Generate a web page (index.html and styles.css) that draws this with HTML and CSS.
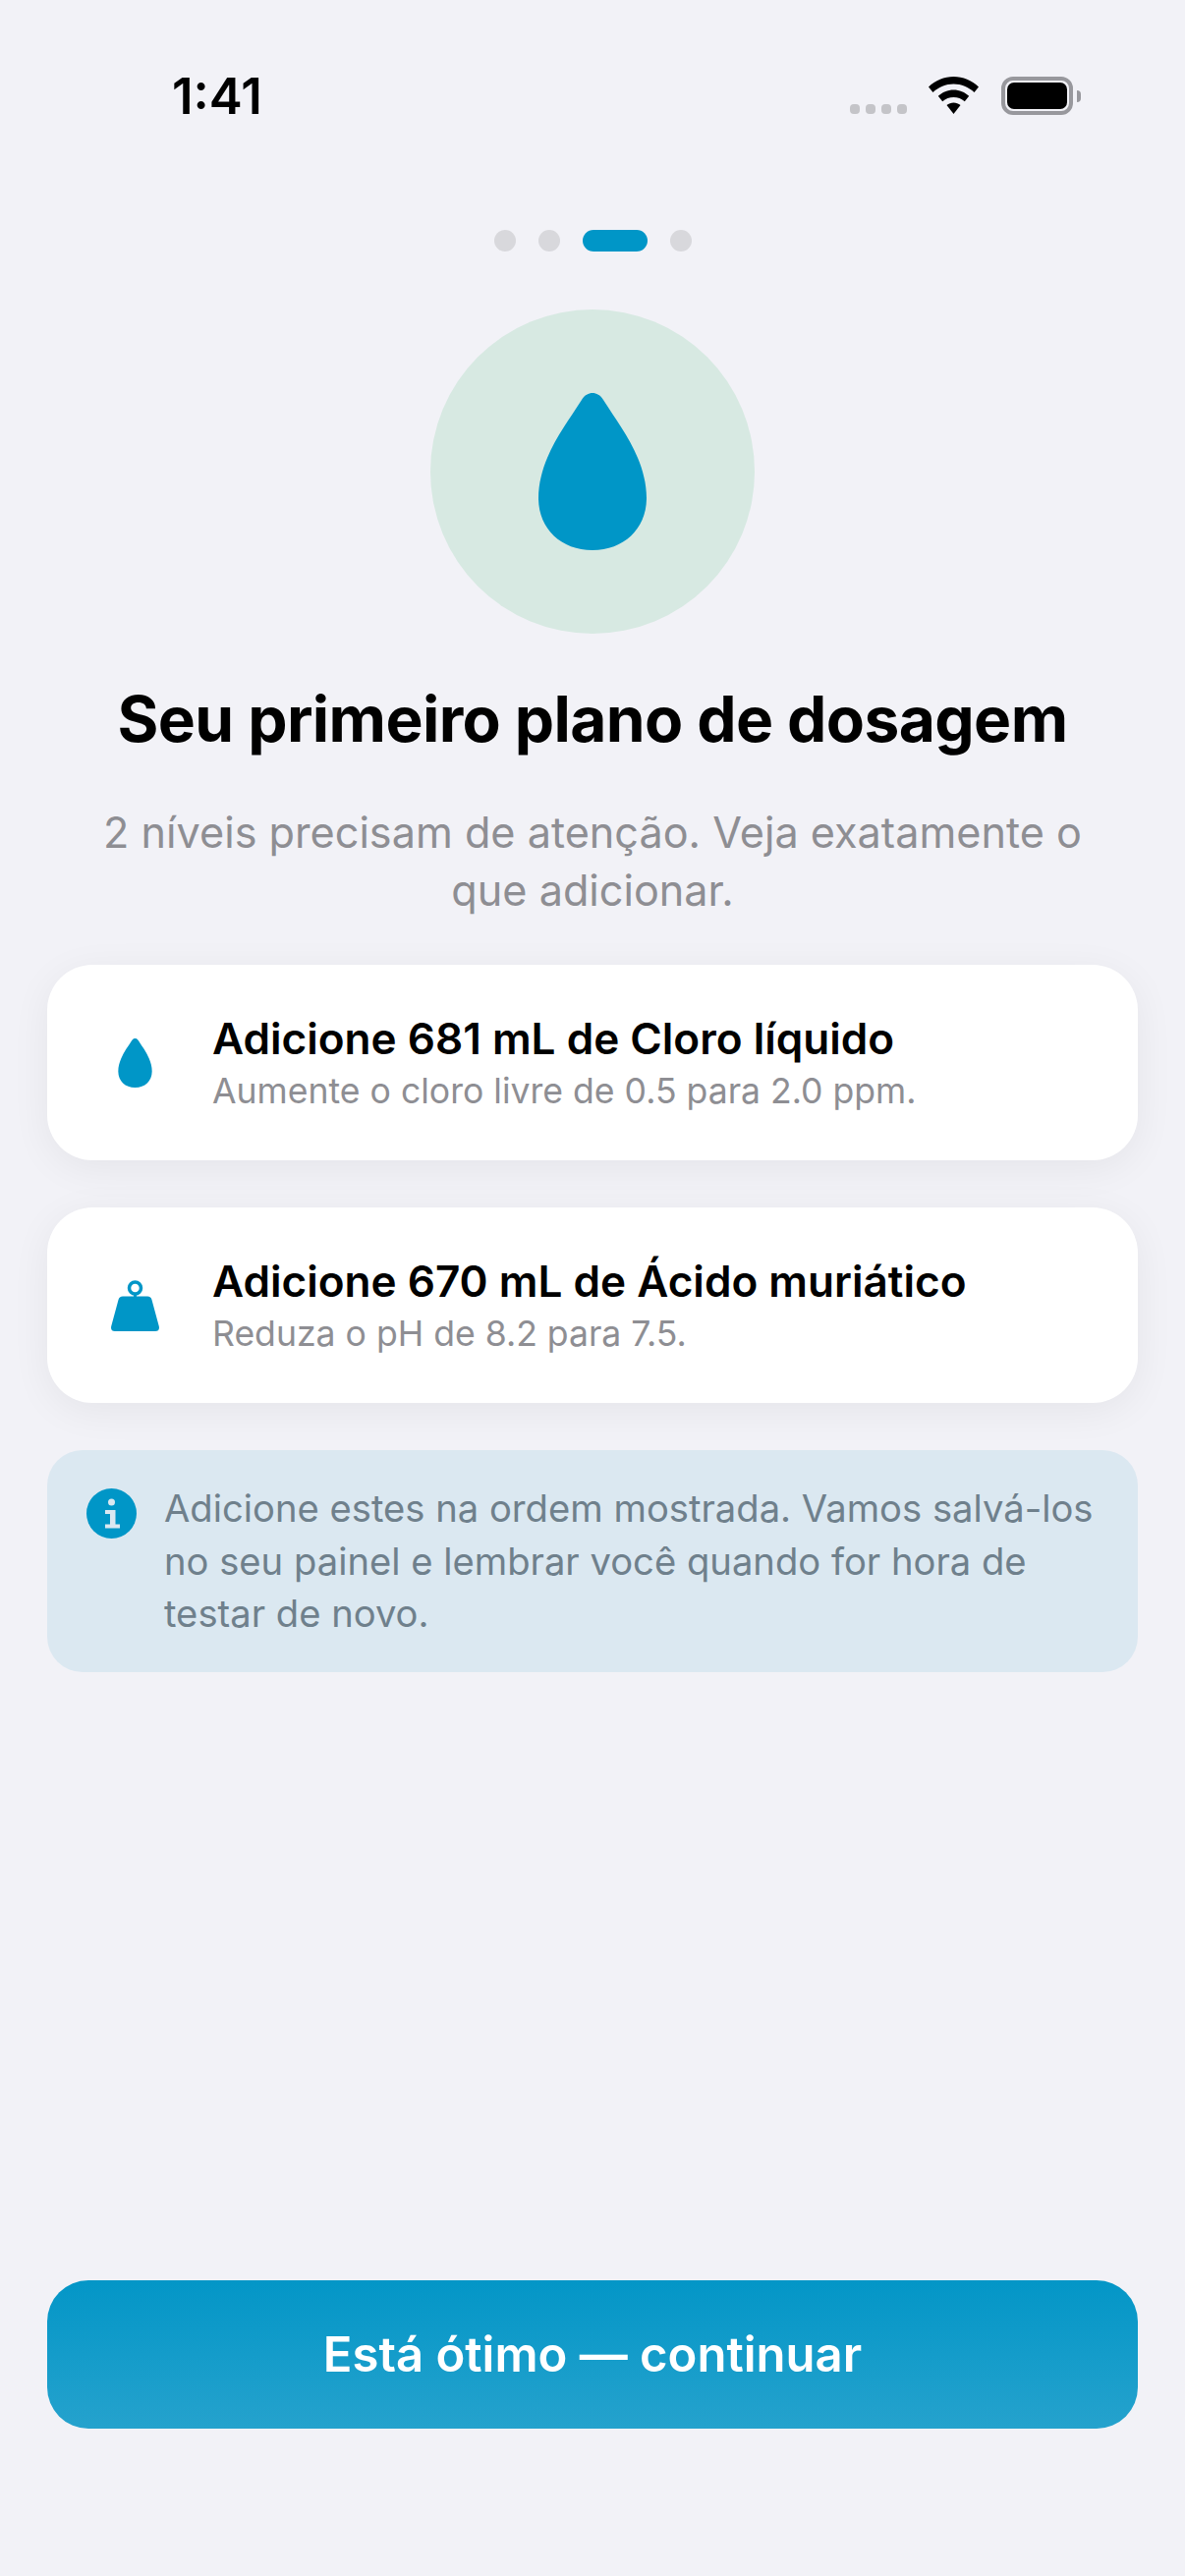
FILE: index.html
```html
<!DOCTYPE html>
<html lang="pt-BR">
<head>
<meta charset="utf-8">
<title>Seu primeiro plano de dosagem</title>
<link rel="stylesheet" href="styles.css">
</head>
<body>
<svg class="defs" width="0" height="0" aria-hidden="true">
  <symbol id="drop" viewBox="0 0 110 160">
    <path d="M55 0C59 0 63 2 66 7C78 26 92 44 101 66C106 78 110 92 110 107C110 138 87 160 55 160C23 160 0 138 0 107C0 92 4 78 9 66C18 44 32 26 44 7C47 2 51 0 55 0Z"/>
  </symbol>
</svg>
<main class="screen">
  <header class="status">
    <span class="time">1:41</span>
    <div class="status-icons">
      <div class="cells"><i></i><i></i><i></i><i></i></div>
      <svg class="wifi" viewBox="0 0 51 38"><path d="M25.500 0C35 0 44 3.800 51 10.500L46.500 16C40.800 10.700 33.400 7.500 25.500 7.500C17.600 7.500 10.200 10.700 4.500 16L0 10.500C7 3.800 16 0 25.500 0Z"/><path d="M25.500 13.500C31.400 13.500 37 15.800 41.200 19.800L36.800 25.200C33.700 22.500 29.700 21 25.500 21C21.300 21 17.300 22.500 14.200 25.200L9.800 19.800C14 15.800 19.600 13.500 25.500 13.500Z"/><path d="M25.500 26.500C28 26.500 30.500 27.400 32.500 29L25.500 38L18.500 29C20.500 27.400 23 26.500 25.500 26.500Z"/></svg>
      <div class="battery"><div class="battery-fill"></div></div>
      <div class="battery-nub"></div>
    </div>
  </header>

  <div class="dots"><i class="dot"></i><i class="dot"></i><i class="dot active"></i><i class="dot"></i></div>

  <div class="hero"><svg class="hero-drop"><use href="#drop"/></svg></div>

  <h1 class="title">Seu primeiro plano de dosagem</h1>
  <p class="subtitle">2 níveis precisam de atenção. Veja exatamente o que adicionar.</p>

  <section class="card">
    <div class="card-icon"><svg class="small-drop"><use href="#drop"/></svg></div>
    <div class="card-text">
      <h2 class="card-title">Adicione 681 mL de Cloro líquido</h2>
      <p class="card-sub">Aumente o cloro livre de 0.5 para 2.0 ppm.</p>
    </div>
  </section>

  <section class="card">
    <div class="card-icon">
      <svg class="weight" viewBox="0 0 49 52"><circle cx="24.500" cy="8" r="6" fill="none" stroke="#0096c7" stroke-width="3.500"/><rect x="23" y="13" width="3" height="5" fill="#0096c7"/><path d="M12 16.500H37C39.500 16.500 41 18 41.500 20L48.800 47C49.500 50 48 52 45 52H4C1 52 -.5 50 .2 47L7.500 20C8 18 9.500 16.500 12 16.500Z" fill="#0096c7"/></svg>
    </div>
    <div class="card-text">
      <h2 class="card-title">Adicione 670 mL de Ácido muriático</h2>
      <p class="card-sub">Reduza o pH de 8.2 para 7.5.</p>
    </div>
  </section>

  <aside class="info">
    <svg class="info-icon" viewBox="0 0 51 51"><circle cx="25.500" cy="25.500" r="25.500" fill="#0096c7"/><circle cx="25.500" cy="14" r="3.500" fill="#dbe8f1"/><path d="M19 22H29.500V36.500H34V40.500H19V36.500H24V26H19Z" fill="#dbe8f1"/></svg>
    <p class="info-text">Adicione estes na ordem mostrada. Vamos salvá-los no seu painel e lembrar você quando for hora de testar de novo.</p>
  </aside>

  <button class="cta">Está ótimo — continuar</button>
</main>
</body>
</html>
```
FILE: styles.css
```css
* { box-sizing: border-box; }
html, body { margin: 0; padding: 0; }
body { width: 1206px; height: 2622px; background: #f2f2f7; font-family: Inter, "Liberation Sans", sans-serif; overflow: hidden; }
.defs { position: absolute; }
.screen { width: 1206px; height: 2622px; padding: 0 48px 150px; display: flex; flex-direction: column; }

.status { height: 234px; display: flex; justify-content: space-between; align-items: flex-start; padding: 73px 0 0 127px; }
.time { font-size: 51px; font-weight: 600; line-height: 50px; color: #000; letter-spacing: 0; }
.status-icons { display: flex; align-items: flex-start; padding: 5px 58px 0 0; }
.cells { display: flex; gap: 6px; margin: 28px 22px 0 0; }
.cells i { width: 10px; height: 10px; border-radius: 4px; background: #c4c4c8; }
.wifi { width: 51px; height: 38px; fill: #000; margin-right: 23px; }
.battery { width: 73px; height: 39px; border: 4px solid #98989d; border-radius: 12px; padding: 2px; background: #f2f2f7; }
.battery-fill { width: 100%; height: 100%; border-radius: 7px; background: #000; }
.battery-nub { width: 4px; height: 12px; margin: 14px 0 0 4px; border-radius: 0 4px 4px 0; background: #98989d; }

.dots { display: flex; justify-content: center; gap: 23px; height: 22px; }
.dot { width: 22px; height: 22px; border-radius: 11px; background: #d8d8dc; }
.dot.active { width: 66px; background: #0096c7; }

.hero { width: 330px; height: 330px; border-radius: 50%; margin: 59px auto 0; background: #d7e9e2; display: flex; align-items: center; justify-content: center; }
.hero-drop { width: 110px; height: 160px; fill: #0096c7; }

.title { margin: 48px 0 0; text-align: center; font-size: 64px; font-weight: 700; line-height: 78px; letter-spacing: -.6px; color: #000; }
.subtitle { margin: 47px 40px 0; text-align: center; font-size: 43.200px; line-height: 59px; font-weight: 400; color: #8e8e93; }

.card { height: 199px; margin-top: 48px; border-radius: 46px; background: #fff; box-shadow: 0 8px 40px rgba(0, 0, 0, .06); display: flex; align-items: center; padding-left: 41px; }
.subtitle + .card { margin-top: 46px; }
.card-icon { width: 96px; height: 96px; margin-right: 31px; display: flex; align-items: center; justify-content: center; flex-shrink: 0; }
.small-drop { width: 35px; height: 50px; fill: #0096c7; }
.weight { width: 49px; height: 52px; }
.card-title { margin: 0; font-size: 44.100px; line-height: 54px; font-weight: 600; color: #000; }
.card-sub { margin: 4px 0 0; font-size: 35.600px; line-height: 46px; font-weight: 400; color: #8e8e93; }

.info { height: 226px; margin-top: 48px; border-radius: 36px; background: #dbe8f1; display: flex; align-items: flex-start; padding: 39px 40px 0; }
.info-icon { width: 51px; height: 51px; flex-shrink: 0; margin-right: 28px; }
.info-text { margin: -6px 0 0; font-size: 38.200px; line-height: 53.500px; color: #6f808c; }

.cta { height: 151px; margin-top: auto; border: 0; border-radius: 42px; background: linear-gradient(180deg, #0396c7, #25a2cd); color: #fff; font-family: inherit; font-size: 49px; font-weight: 600; }
```
